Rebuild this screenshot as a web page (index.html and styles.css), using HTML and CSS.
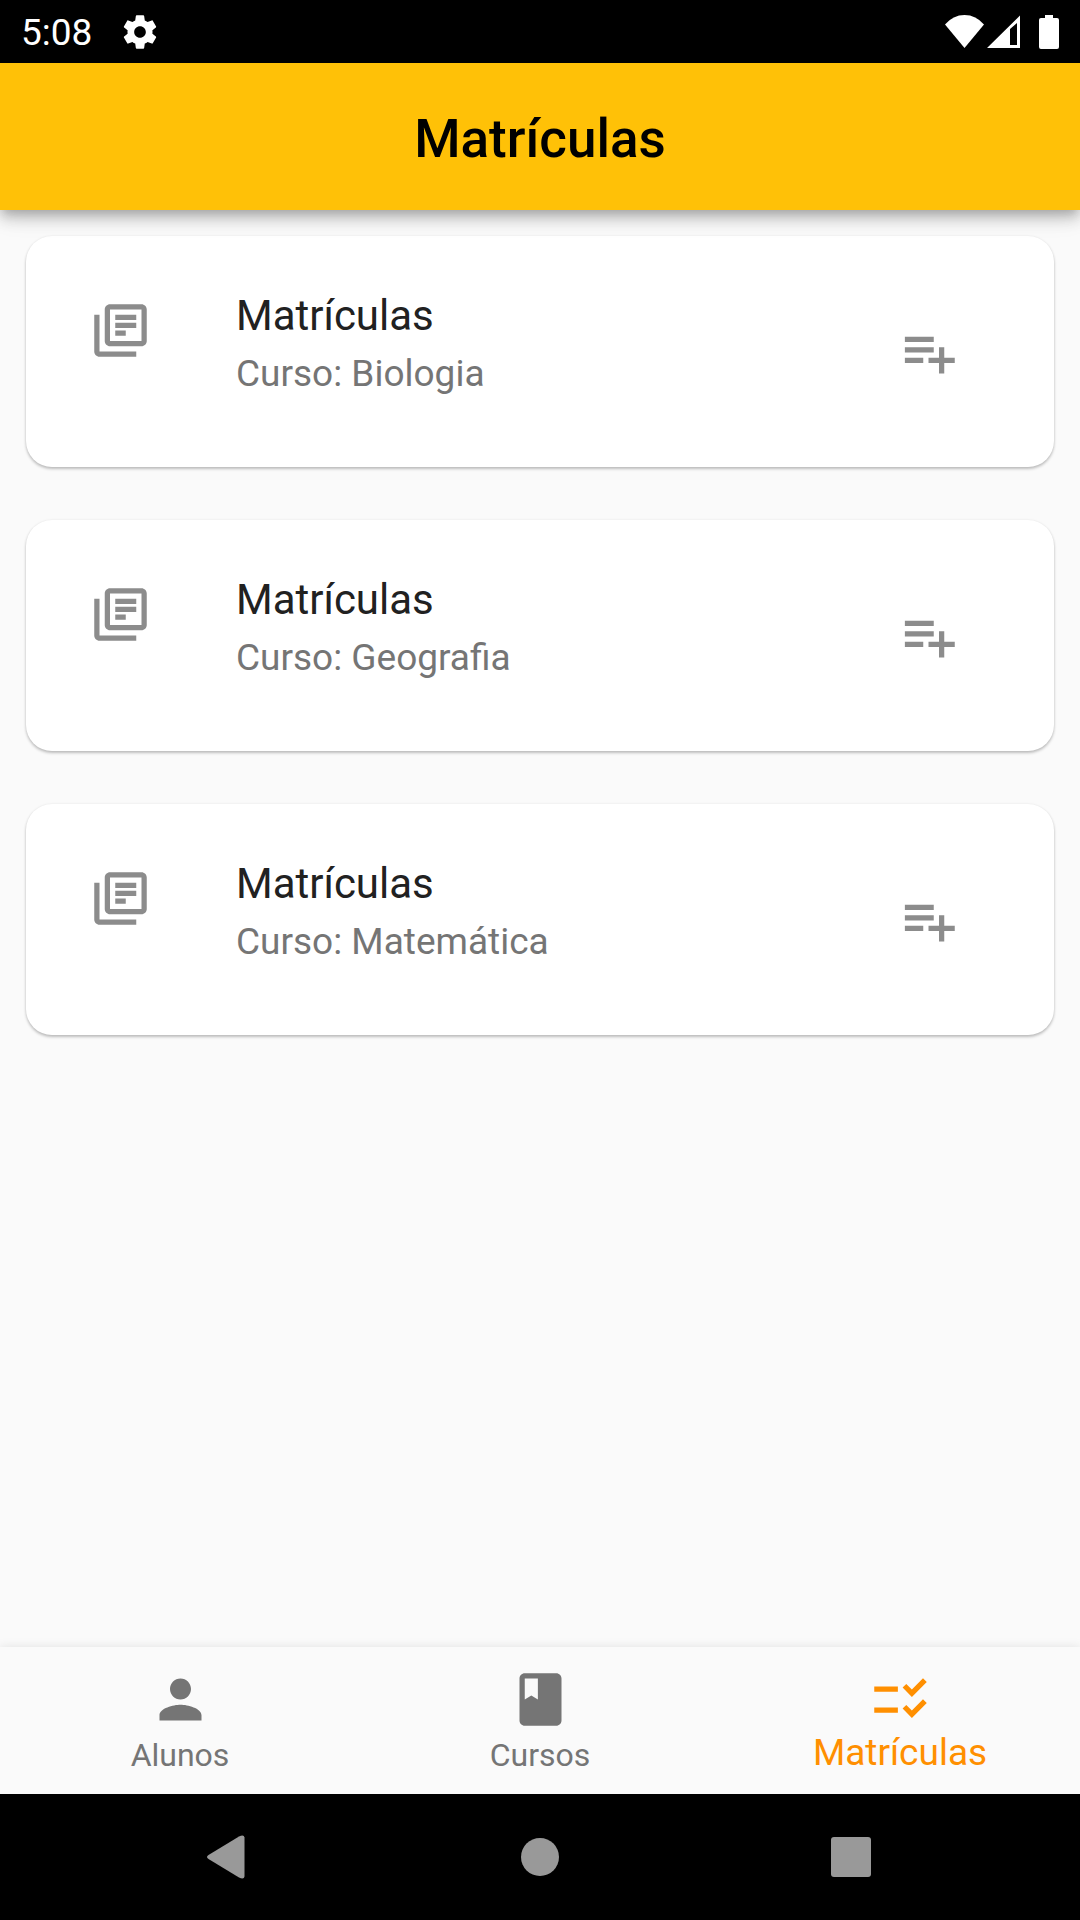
FILE: index.html
```html
<!DOCTYPE html>
<html lang="pt-BR">
<head>
<meta charset="utf-8">
<meta name="viewport" content="width=device-width, initial-scale=1">
<title>Matrículas</title>
<link rel="stylesheet" href="styles.css">
</head>
<body>
<svg class="sprite" aria-hidden="true">
  <symbol id="books" viewBox="0 0 24 24"><path d="M4 6H2v14c0 1.100.9 2 2 2h14v-2H4V6zm16-4H8c-1.100 0-2 .9-2 2v12c0 1.100.9 2 2 2h12c1.100 0 2-.9 2-2V4c0-1.100-.9-2-2-2zm0 14H8V4h12v12zM10 9h8v2h-8zm0 3h4v2h-4zm0-6h8v2h-8z"/></symbol>
  <symbol id="playlist-add" viewBox="0 0 24 24"><path d="M14 10H3v2h11v-2zm0-4H3v2h11V6zm4 8v-4h-2v4h-4v2h4v4h2v-4h4v-2h-4zM3 16h7v-2H3v2z"/></symbol>
</svg>

<div class="status-bar">
  <span class="status-time">5:08</span>
  <svg class="status-gear" viewBox="0 0 24 24" aria-hidden="true"><path d="M19.430 12.980c.04-.32.07-.64.07-.98s-.03-.66-.07-.98l2.110-1.650c.19-.15.24-.42.12-.64l-2-3.460c-.12-.22-.39-.3-.61-.22l-2.490 1c-.52-.4-1.080-.73-1.690-.98l-.38-2.650C14.460 2.180 14.250 2 14 2h-4c-.25 0-.46.18-.49.42l-.38 2.650c-.61.25-1.170.59-1.690.98l-2.490-1c-.23-.09-.49 0-.61.22l-2 3.460c-.13.22-.07.49.12.64l2.110 1.650c-.04.32-.07.65-.07.98s.03.66.07.98l-2.110 1.650c-.19.15-.24.42-.12.64l2 3.460c.12.22.39.3.61.22l2.490-1c.52.4 1.080.73 1.690.98l.38 2.650c.03.24.24.42.49.42h4c.25 0 .46-.18.49-.42l.38-2.650c.61-.25 1.170-.59 1.690-.98l2.490 1c.23.09.49 0 .61-.22l2-3.460c.12-.22.07-.49-.12-.64l-2.110-1.650zM12 15.500c-1.930 0-3.500-1.570-3.500-3.500s1.570-3.500 3.500-3.500 3.500 1.570 3.500 3.500-1.570 3.500-3.500 3.500z"/></svg>
  <svg class="status-signals" viewBox="0 0 114 34" aria-hidden="true">
    <path d="M0 9.500Q8 0 19.500 0T39 9.500L19.500 33z"/>
    <path fill-rule="evenodd" d="M42 33L75 .5V33zM65 14v16h7V8z"/>
    <path d="M100 0h8v3h4q2 0 2 2v27q0 2-2 2H96q-2 0-2-2V5q0-2 2-2h4z"/>
  </svg>
</div>

<header class="app-bar"><h1>Matrículas</h1></header>

<main class="list">
  <article class="card">
    <svg class="icon card-icon" aria-hidden="true"><use href="#books"/></svg>
    <div class="card-text"><h2>Matrículas</h2><p>Curso: Biologia</p></div>
    <button class="card-action" type="button" aria-label="Adicionar"><svg class="icon" aria-hidden="true"><use href="#playlist-add"/></svg></button>
  </article>
  <article class="card">
    <svg class="icon card-icon" aria-hidden="true"><use href="#books"/></svg>
    <div class="card-text"><h2>Matrículas</h2><p>Curso: Geografia</p></div>
    <button class="card-action" type="button" aria-label="Adicionar"><svg class="icon" aria-hidden="true"><use href="#playlist-add"/></svg></button>
  </article>
  <article class="card">
    <svg class="icon card-icon" aria-hidden="true"><use href="#books"/></svg>
    <div class="card-text"><h2>Matrículas</h2><p>Curso: Matemática</p></div>
    <button class="card-action" type="button" aria-label="Adicionar"><svg class="icon" aria-hidden="true"><use href="#playlist-add"/></svg></button>
  </article>
</main>

<nav class="tabs">
  <a class="tab" href="#alunos">
    <svg class="icon" viewBox="0 0 24 24" aria-hidden="true"><path d="M12 12c2.210 0 4-1.790 4-4s-1.790-4-4-4-4 1.790-4 4 1.790 4 4 4zm0 2c-2.670 0-8 1.340-8 4v2h16v-2c0-2.660-5.330-4-8-4z"/></svg>
    <span>Alunos</span>
  </a>
  <a class="tab" href="#cursos">
    <svg class="icon" viewBox="0 0 24 24" aria-hidden="true"><path d="M18 2H6c-1.100 0-2 .9-2 2v16c0 1.100.9 2 2 2h12c1.100 0 2-.9 2-2V4c0-1.100-.9-2-2-2zM6 4h5v8l-2.500-1.500L6 12V4z"/></svg>
    <span>Cursos</span>
  </a>
  <a class="tab tab-active" href="#matriculas" aria-current="page">
    <svg class="icon" viewBox="0 0 24 24" aria-hidden="true"><path d="M11 7H2v2h9V7zm0 8H2v2h9v-2zm5.340-4l-3.540-3.540 1.410-1.410 2.120 2.120 4.240-4.240L22 5.340 16.340 11zm0 8l-3.540-3.540 1.410-1.410 2.120 2.120 4.240-4.240L22 13.340 16.340 19z"/></svg>
    <span>Matrículas</span>
  </a>
</nav>

<div class="system-nav">
  <button type="button" aria-label="Voltar"><svg viewBox="0 0 48 48" aria-hidden="true"><path d="M3.500 22L34 3.500q5-2.500 5.500 1v39q-.5 3.500-5.500 1L3.500 26q-3-2 0-4z"/></svg></button>
  <button type="button" aria-label="Início"><svg viewBox="0 0 48 48" aria-hidden="true"><circle cx="24" cy="24" r="19"/></svg></button>
  <button type="button" aria-label="Recentes"><svg viewBox="0 0 48 48" aria-hidden="true"><rect x="4" y="4" width="40" height="40" rx="3"/></svg></button>
</div>
</body>
</html>
```
FILE: styles.css
```css
* {
  box-sizing: border-box;
}

body {
  margin: 0;
  min-height: 100vh;
  display: flex;
  flex-direction: column;
  background: #fafafa;
  font-family: Roboto, sans-serif;
}

h1, h2, p {
  margin: 0;
  font-weight: 400;
}

button {
  border: 0;
  padding: 0;
  background: none;
  color: inherit;
  cursor: pointer;
}

svg {
  display: block;
  fill: currentColor;
}

.sprite {
  display: none;
}

.icon {
  flex: none;
  width: 63px;
  height: 63px;
}

/* Android status bar */
.status-bar {
  display: flex;
  align-items: center;
  height: 63px;
  padding: 0 21px;
  background: #000;
  color: #fff;
}

.status-time {
  padding-top: 2px;
  font-size: 37px;
  line-height: 44px;
}

.status-gear {
  width: 40px;
  height: 40px;
  margin-left: 28px;
}

.status-signals {
  width: 114px;
  height: 34px;
  margin-left: auto;
}

/* App bar */
.app-bar {
  position: relative;
  padding: 45px 0 40px;
  background: #ffc107;
  color: #000;
  text-align: center;
  box-shadow: 0 5px 10px -3px rgba(0, 0, 0, .2), 0 10px 13px rgba(0, 0, 0, .14), 0 3px 26px rgba(0, 0, 0, .12);
}

.app-bar h1 {
  font-size: 53px;
  line-height: 62px;
  font-weight: 500;
}

/* Enrolment cards */
.list {
  flex: 1;
  display: flex;
  flex-direction: column;
  gap: 53px;
  padding: 26px;
}

.card {
  display: flex;
  padding: 0 63px;
  border-radius: 26px;
  background: #fff;
  box-shadow: 0 2px 3px rgba(0, 0, 0, .24), 0 0 3px rgba(0, 0, 0, .06);
}

.card-icon {
  margin: 63px 84px 0 0;
  color: #8c8c8c;
}

.card-text {
  flex: 1;
  padding: 55px 0 71px;
}

.card-text h2 {
  color: #212121;
  font-size: 42px;
  line-height: 50px;
}

.card-text p {
  padding-top: 11px;
  color: #757575;
  font-size: 37px;
  line-height: 44px;
}

.card-action {
  display: flex;
  align-items: center;
  justify-content: center;
  width: 126px;
  padding-top: 1px;
  color: #8c8c8c;
}

/* Bottom tabs */
.tabs {
  display: grid;
  grid-template-columns: repeat(3, 1fr);
  background: #fafafa;
  box-shadow: 0 0 10px rgba(0, 0, 0, .1);
}

.tab {
  display: flex;
  flex-direction: column;
  align-items: center;
  padding: 21px 0 15px;
  color: #757575;
  font-size: 32px;
  line-height: 48px;
  text-decoration: none;
}

.tab-active {
  color: #ff8f00;
  font-size: 37px;
  line-height: 44px;
}

/* Android navigation bar */
.system-nav {
  position: relative;
  display: grid;
  grid-template-columns: repeat(3, 1fr);
  padding: 0 73px;
  background: #000;
  color: #999;
}

.system-nav button {
  display: flex;
  align-items: center;
  justify-content: center;
  height: 126px;
}

.system-nav svg {
  width: 48px;
  height: 48px;
}
```
